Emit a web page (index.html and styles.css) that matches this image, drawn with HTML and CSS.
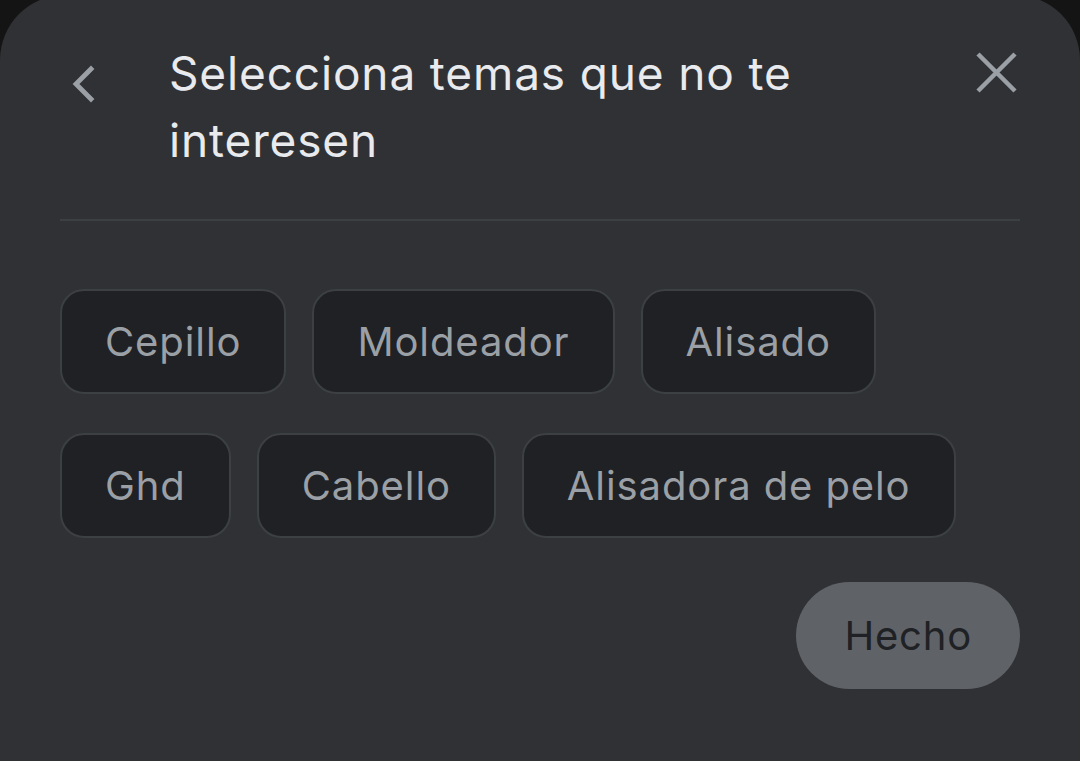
FILE: index.html
```html
<!DOCTYPE html>
<html lang="es">
<head>
<meta charset="UTF-8">
<meta name="viewport" content="width=device-width">
<title>Selecciona temas</title>
<link rel="stylesheet" href="styles.css">
</head>
<body>
<div class="sheet">
  <div class="sheet-head">
    <span class="back">
      <svg width="40" height="48" viewBox="0 0 40 48"><polyline points="31,9 16,24 31,39" fill="none" stroke="#9aa0a6" stroke-width="4.8" stroke-linecap="square"/></svg>
    </span>
    <h1 class="title">Selecciona temas que no te interesen</h1>
    <span class="close">
      <svg width="48" height="48" viewBox="0 0 48 48"><path d="M6 6L43 43M43 6L6 43" fill="none" stroke="#9aa0a6" stroke-width="4.5"/></svg>
    </span>
  </div>
  <div class="chips">
    <div class="chip">Cepillo</div>
    <div class="chip">Moldeador</div>
    <div class="chip">Alisado</div>
    <div class="chip">Ghd</div>
    <div class="chip">Cabello</div>
    <div class="chip">Alisadora de pelo</div>
  </div>
  <div class="actions">
    <button class="done">Hecho</button>
  </div>
</div>
</body>
</html>
```

FILE: styles.css
```css
html,body{margin:0;padding:0}
body{background:#141414;font-family:Inter,Roboto,sans-serif;height:761px;overflow:hidden}
.sheet{margin-top:-5px;height:800px;background:#303134;border-radius:65px 65px 0 0;padding:0 60px;box-sizing:border-box}
.sheet-head{display:flex;align-items:flex-start;padding:45px 0 45px;border-bottom:2px solid #3c4043}
.back{flex:none;width:109px;height:48px;margin-top:20px}
.back svg{display:block}
.title{flex:1;margin:0;max-width:720px;font-size:46px;line-height:67px;font-weight:400;letter-spacing:.85px;color:#e8eaed}
.close{flex:none;margin-left:auto;margin-top:8px;width:48px;height:48px}
.close svg{display:block}
.chips{display:flex;flex-wrap:wrap;gap:39px 26px;margin-top:68px}
.chip{box-sizing:border-box;height:105px;display:flex;align-items:center;padding:0 43px;background:#202124;border:2px solid #3c4043;border-radius:24px;font-size:40px;letter-spacing:.9px;color:#9aa0a6}
.actions{display:flex;justify-content:flex-end;margin-top:44px}
.done{height:107px;padding:0 48px;border:0;border-radius:54px;background:#5f6368;color:#202124;font-family:inherit;font-size:40px;letter-spacing:.8px}
```
